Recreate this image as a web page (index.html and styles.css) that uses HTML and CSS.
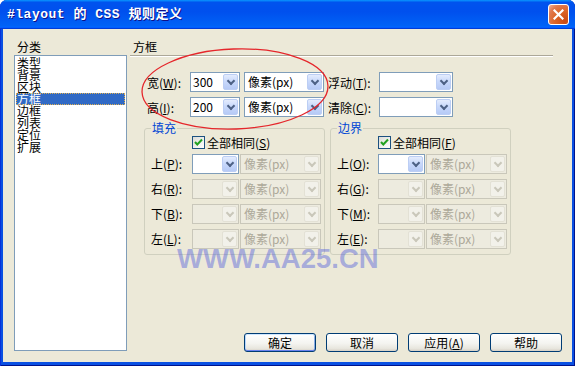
FILE: index.html
```html
<!DOCTYPE html>
<html lang="zh-CN">
<head>
<meta charset="utf-8">
<title>#layout 的 CSS 规则定义</title>
<link rel="stylesheet" href="styles.css">
</head>
<body>
<div class="window">
  <div class="titlebar">
    <span class="title">#layout 的 CSS 规则定义</span>
    <span class="close">
      <svg width="11" height="11" viewBox="0 0 11 11"><path d="M1.5 1.5 L9.5 9.5 M9.5 1.5 L1.5 9.5" stroke="#fff" stroke-width="2.2" stroke-linecap="square" fill="none"/></svg>
    </span>
  </div>
  <div class="client">
    <div class="side">
      <div class="side-label">分类</div>
      <ul class="listbox">
        <li>类型</li>
        <li>背景</li>
        <li>区块</li>
        <li class="selected">方框</li>
        <li>边框</li>
        <li>列表</li>
        <li>定位</li>
        <li>扩展</li>
      </ul>
    </div>
    <div class="main">
      <div class="section-head">方框</div>
      <div class="rule"></div>
      <div class="form">
        <div class="row">
          <span class="lbl lbl-w">宽(<u>W</u>):</span>
          <div class="combo c-num"><span class="val">300</span><span class="drop"></span></div>
          <div class="combo c-unit"><span class="val">像素(px)</span><span class="drop"></span></div>
          <span class="lbl lbl-float">浮动(<u>T</u>):</span>
          <div class="combo c-float"><span class="val"></span><span class="drop"></span></div>
        </div>
        <div class="row">
          <span class="lbl lbl-w">高(<u>I</u>):</span>
          <div class="combo c-num"><span class="val">200</span><span class="drop"></span></div>
          <div class="combo c-unit"><span class="val">像素(px)</span><span class="drop"></span></div>
          <span class="lbl lbl-float">清除(<u>C</u>):</span>
          <div class="combo c-float"><span class="val"></span><span class="drop"></span></div>
        </div>
      </div>
      <div class="groups">
        <fieldset class="group">
          <legend>填充</legend>
          <div class="check-row"><span class="checkbox"><svg width="11" height="11" viewBox="0 0 11 11"><path d="M2 5 L4.3 7.5 L9 2.5" fill="none" stroke="#21A121" stroke-width="2"/></svg></span>全部相同(<u>S</u>)</div>
          <div class="grow">
            <span class="glbl">上(<u>P</u>):</span>
            <div class="combo c-small"><span class="val"></span><span class="drop"></span></div>
            <div class="combo c-gunit disabled"><span class="val">像素(px)</span><span class="drop"></span></div>
          </div>
          <div class="grow">
            <span class="glbl">右(<u>R</u>):</span>
            <div class="combo c-small disabled"><span class="val"></span><span class="drop"></span></div>
            <div class="combo c-gunit disabled"><span class="val">像素(px)</span><span class="drop"></span></div>
          </div>
          <div class="grow">
            <span class="glbl">下(<u>B</u>):</span>
            <div class="combo c-small disabled"><span class="val"></span><span class="drop"></span></div>
            <div class="combo c-gunit disabled"><span class="val">像素(px)</span><span class="drop"></span></div>
          </div>
          <div class="grow">
            <span class="glbl">左(<u>L</u>):</span>
            <div class="combo c-small disabled"><span class="val"></span><span class="drop"></span></div>
            <div class="combo c-gunit disabled"><span class="val">像素(px)</span><span class="drop"></span></div>
          </div>
        </fieldset>
        <fieldset class="group">
          <legend>边界</legend>
          <div class="check-row"><span class="checkbox"><svg width="11" height="11" viewBox="0 0 11 11"><path d="M2 5 L4.3 7.5 L9 2.5" fill="none" stroke="#21A121" stroke-width="2"/></svg></span>全部相同(<u>F</u>)</div>
          <div class="grow">
            <span class="glbl">上(<u>O</u>):</span>
            <div class="combo c-small"><span class="val"></span><span class="drop"></span></div>
            <div class="combo c-gunit disabled"><span class="val">像素(px)</span><span class="drop"></span></div>
          </div>
          <div class="grow">
            <span class="glbl">右(<u>G</u>):</span>
            <div class="combo c-small disabled"><span class="val"></span><span class="drop"></span></div>
            <div class="combo c-gunit disabled"><span class="val">像素(px)</span><span class="drop"></span></div>
          </div>
          <div class="grow">
            <span class="glbl">下(<u>M</u>):</span>
            <div class="combo c-small disabled"><span class="val"></span><span class="drop"></span></div>
            <div class="combo c-gunit disabled"><span class="val">像素(px)</span><span class="drop"></span></div>
          </div>
          <div class="grow">
            <span class="glbl">左(<u>E</u>):</span>
            <div class="combo c-small disabled"><span class="val"></span><span class="drop"></span></div>
            <div class="combo c-gunit disabled"><span class="val">像素(px)</span><span class="drop"></span></div>
          </div>
        </fieldset>
      </div>
      <div class="buttons">
        <button class="btn default">确定</button>
        <button class="btn">取消</button>
        <button class="btn">应用(<u>A</u>)</button>
        <button class="btn">帮助</button>
      </div>
    </div>
    <svg class="ellipse" width="200" height="96" viewBox="0 0 200 96"><ellipse cx="100" cy="46" rx="93" ry="40" transform="rotate(-2 100 46)" fill="none" stroke="#E5262B" stroke-width="1.3"/></svg>
    <div class="watermark">WWW.AA25.CN</div>
  </div>
</div>
</body>
</html>
```

FILE: styles.css
```css
* { box-sizing: border-box; }
html, body { margin: 0; padding: 0; background: #fff; }
body {
  font-family: "Noto Sans CJK SC", "Noto Sans", sans-serif;
  font-size: 12px;
  color: #000;
}
u { text-decoration: underline; text-underline-offset: 1px; }

.window {
  width: 575px;
  height: 366px;
  display: flex;
  flex-direction: column;
  background: #0A50E2;
  border-radius: 7px 7px 0 0;
  overflow: hidden;
  box-shadow: inset 1px 0 #0831D9, inset -1px 0 #00138C, inset 0 -1px #00138C;
}

.titlebar {
  height: 29px;
  flex: none;
  display: flex;
  align-items: center;
  justify-content: space-between;
  padding: 0 6px 0 7px;
  background: linear-gradient(180deg, #0997ff, #0053ee 8%, #0050ee 40%, #0062f6 88%, #0066ff 93%, #005bff 95%, #003dd7 96%, #003dd7);
}
.title {
  color: #fff;
  font-family: "Liberation Mono", "Noto Sans CJK SC", monospace;
  font-weight: bold;
  font-size: 13px;
  letter-spacing: 0.5px;
  line-height: 16px;
  white-space: pre;
  text-shadow: 1px 1px #0F1089;
}
.close {
  width: 21px;
  height: 21px;
  border: 1px solid #fff;
  border-radius: 3px;
  background: radial-gradient(circle at 85% 85%, #C94A14 0, #DC6527 45%, #E07A50 75%, #F2B39A 100%);
  display: flex;
  align-items: center;
  justify-content: center;
}

.client {
  flex: 1;
  margin: 0 3px 4px;
  background: #ECE9D8;
  display: flex;
  padding: 9px 10px 10px 11px;
  position: relative;
}

.side { width: 113px; flex: none; display: flex; flex-direction: column; }
.side-label { height: 17px; line-height: 17px; padding-left: 3px; }
.listbox {
  list-style: none;
  margin: 0;
  padding: 1px;
  height: 296px;
  border: 1px solid #7F9DB9;
  background: #fff;
}
.listbox li { height: 12px; line-height: 12px; padding-left: 1px; white-space: nowrap; }
.listbox li.selected {
  background: #316AC5;
  color: #fff;
  outline: 1px dotted #E0B050;
  outline-offset: -1px;
}

.main { flex: 1; margin-left: 3px; display: flex; flex-direction: column; min-width: 0; }
.section-head { height: 17px; line-height: 17px; padding-left: 3px; }
.rule { height: 2px; border-top: 1px solid #ACA899; border-bottom: 1px solid #fff; margin-right: 9px; }

.form { padding-left: 17px; margin-top: 15px; display: flex; flex-direction: column; gap: 5px; }
.row { display: flex; align-items: center; height: 20px; }
.lbl { flex: none; white-space: nowrap; }
.lbl-w { width: 43px; }
.lbl-float { width: 55px; padding-left: 4px; }

.combo {
  display: flex;
  flex: none;
  height: 20px;
  border: 1px solid #7F9DB9;
  background: #fff;
}
.combo .val {
  flex: 1;
  min-width: 0;
  padding-left: 2px;
  line-height: 18px;
  white-space: nowrap;
  overflow: hidden;
}
.combo .drop {
  flex: none;
  width: 15px;
  margin: 1px;
  border: 1px solid #BCCEF4;
  border-radius: 2px;
  background: linear-gradient(180deg, #E4ECFD 0%, #C9D9FB 45%, #B6CAF6 100%);
  display: flex;
  align-items: center;
  justify-content: center;
}
.combo .drop::after {
  content: "";
  width: 4px;
  height: 4px;
  border-right: 2px solid #4D6185;
  border-bottom: 2px solid #4D6185;
  transform: translateY(-1px) rotate(45deg);
}
.combo.disabled { border-color: #C9C7BA; background: #EDEBDF; color: #ACA899; }
.combo.disabled .drop { border-color: #E3E1D5; background: #F2F1EA; }
.combo.disabled .drop::after { border-color: #C9C7BA; }

.c-num { width: 50px; margin-right: 4px; }
.c-unit { width: 80px; }
.c-unit .val { padding-left: 3px; }
.c-float { width: 74px; }

.groups { display: flex; gap: 5px; margin: 4px 0 0 14px; }
.group {
  width: 181px;
  margin: 0;
  padding: 0 0 5px 6px;
  border: 1px solid #D0D0BF;
  border-radius: 3px;
  min-width: 0;
}
.group legend { padding: 0 1px; margin: 0; color: #0046D5; line-height: 14px; }
.check-row { height: 14px; display: flex; align-items: center; padding-left: 41px; white-space: nowrap; }
.checkbox {
  width: 13px;
  height: 13px;
  margin-right: 2px;
  border: 1px solid #1C5180;
  background: linear-gradient(135deg, #DCDCD7, #fff);
  display: flex;
  align-items: center;
  justify-content: center;
}
.grow { display: flex; align-items: center; height: 20px; margin-top: 5px; }
.glbl { width: 41px; flex: none; white-space: nowrap; line-height: 16px; }
.c-small { width: 47px; margin-right: 1px; }
.c-gunit { width: 81px; }
.c-gunit .val { padding-left: 3px; }

.buttons { margin-top: auto; display: flex; justify-content: flex-end; gap: 10px; }
.btn {
  width: 72px;
  height: 19px;
  padding: 0;
  border: 1px solid #003C74;
  border-radius: 3px;
  background: linear-gradient(180deg, #FFFFFF 0%, #F4F4F0 55%, #E8E6DE 85%, #D6D0C5 100%);
  font: inherit;
  line-height: 17px;
  color: #000;
}
.btn.default {
  box-shadow: inset 0 1px #CEE7FF, inset 0 -1px #6982EE, inset 1px 0 #B8D6FB, inset -1px 0 #89ADE4;
}

.ellipse { position: absolute; left: 132px; top: 14px; }
.watermark {
  position: absolute;
  left: 174px;
  top: 220px;
  font-family: "Liberation Sans", Arial, sans-serif;
  font-weight: bold;
  font-size: 27.5px;
  line-height: 20px;
  color: rgba(70, 85, 220, 0.42);
  white-space: nowrap;
}
```
